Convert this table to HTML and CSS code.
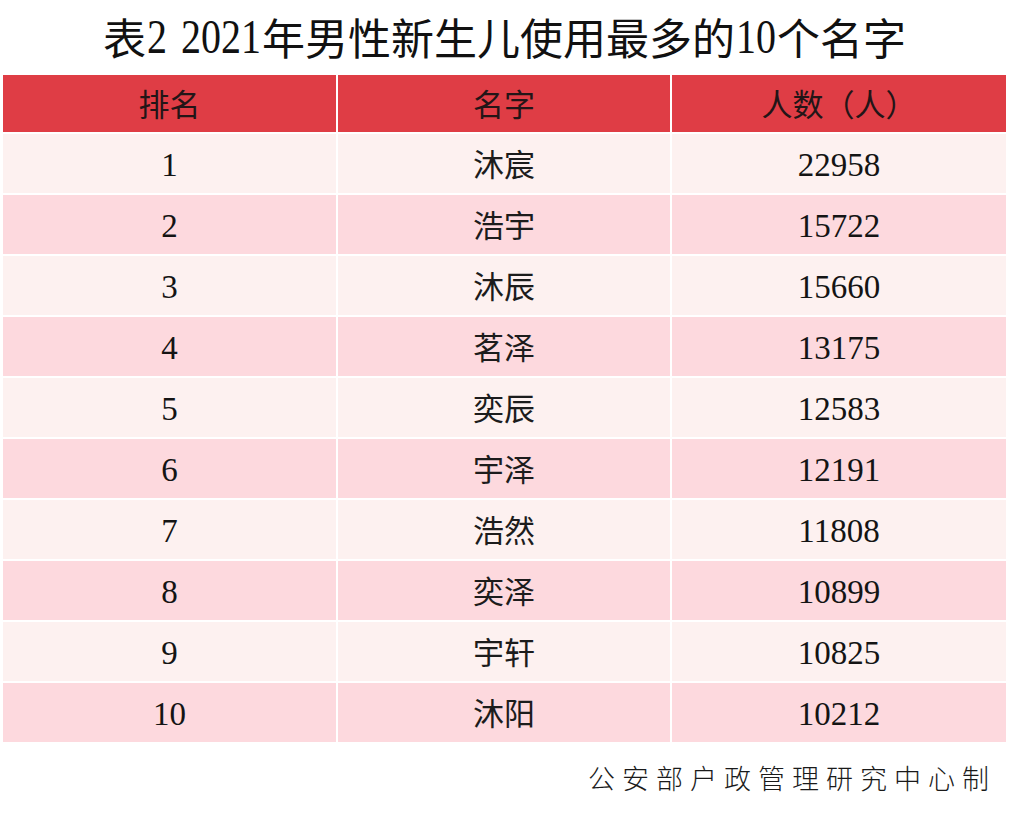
FILE: index.html
```html
<!DOCTYPE html>
<html lang="zh-CN">
<head>
<meta charset="utf-8">
<title>表2 2021年男性新生儿使用最多的10个名字</title>
<link rel="stylesheet" href="styles.css">
</head>
<body>
<div class="page">
  <h1 class="title">表<span class="num">2</span><span class="sp"></span><span class="num">2021</span>年男性新生儿使用最多的<span class="num">10</span>个名字</h1>
  <div class="table">
    <div class="cell head">排名</div>
    <div class="cell head">名字</div>
    <div class="cell head">人数（人）</div>

    <div class="cell odd num-cell">1</div><div class="cell odd name">沐宸</div><div class="cell odd num-cell">22958</div>
    <div class="cell even num-cell">2</div><div class="cell even name">浩宇</div><div class="cell even num-cell">15722</div>
    <div class="cell odd num-cell">3</div><div class="cell odd name">沐辰</div><div class="cell odd num-cell">15660</div>
    <div class="cell even num-cell">4</div><div class="cell even name">茗泽</div><div class="cell even num-cell">13175</div>
    <div class="cell odd num-cell">5</div><div class="cell odd name">奕辰</div><div class="cell odd num-cell">12583</div>
    <div class="cell even num-cell">6</div><div class="cell even name">宇泽</div><div class="cell even num-cell">12191</div>
    <div class="cell odd num-cell">7</div><div class="cell odd name">浩然</div><div class="cell odd num-cell">11808</div>
    <div class="cell even num-cell">8</div><div class="cell even name">奕泽</div><div class="cell even num-cell">10899</div>
    <div class="cell odd num-cell">9</div><div class="cell odd name">宇轩</div><div class="cell odd num-cell">10825</div>
    <div class="cell even num-cell">10</div><div class="cell even name">沐阳</div><div class="cell even num-cell">10212</div>
  </div>
  <div class="source">公安部户政管理研究中心制</div>
</div>
</body>
</html>
```

FILE: styles.css
```css
html, body {
  margin: 0;
  padding: 0;
  background: #ffffff;
}

.page {
  width: 1012px;
  height: 815px;
  box-sizing: border-box;
  padding: 0 6px 0 3px;
  display: flex;
  flex-direction: column;
  font-family: "Noto Sans CJK SC", sans-serif;
  color: #1a1a1a;
}

.title {
  margin: 0;
  height: 75px;
  display: flex;
  align-items: center;
  justify-content: center;
  font-size: 43px;
  font-weight: 400;
  line-height: 1;
  padding-bottom: 2px;
  box-sizing: border-box;
  color: #111;
}

.title .num {
  display: inline-block;
  font-family: "Liberation Serif", serif;
  font-weight: 400;
  font-size: 40px;
  transform: scale(1, 1.22);
  margin: 0 1px;
}

.title .sp {
  display: inline-block;
  width: 12px;
}

.table {
  display: grid;
  grid-template-columns: 333px 332px 334px;
  grid-template-rows: 57px repeat(10, 59px);
  column-gap: 2px;
  row-gap: 2px;
}

.cell {
  display: flex;
  align-items: center;
  justify-content: center;
  line-height: 1;
}

.head {
  background: #df3d45;
  font-size: 31px;
  font-weight: 400;
  color: #231517;
  padding-bottom: 2px;
  box-sizing: border-box;
}

.odd {
  background: #fdf1f0;
}

.even {
  background: #fdd9de;
}

.num-cell {
  font-family: "Liberation Serif", serif;
  font-size: 33px;
  color: #141414;
  padding-top: 4px;
  box-sizing: border-box;
}

.name {
  font-size: 31px;
  font-weight: 400;
  color: #1c1c1c;
  padding-bottom: 3px;
  box-sizing: border-box;
}

.source {
  margin-top: 16px;
  align-self: flex-end;
  margin-right: 10px;
  font-size: 27px;
  font-weight: 300;
  letter-spacing: 7px;
  color: #1a1a1a;
}
```
